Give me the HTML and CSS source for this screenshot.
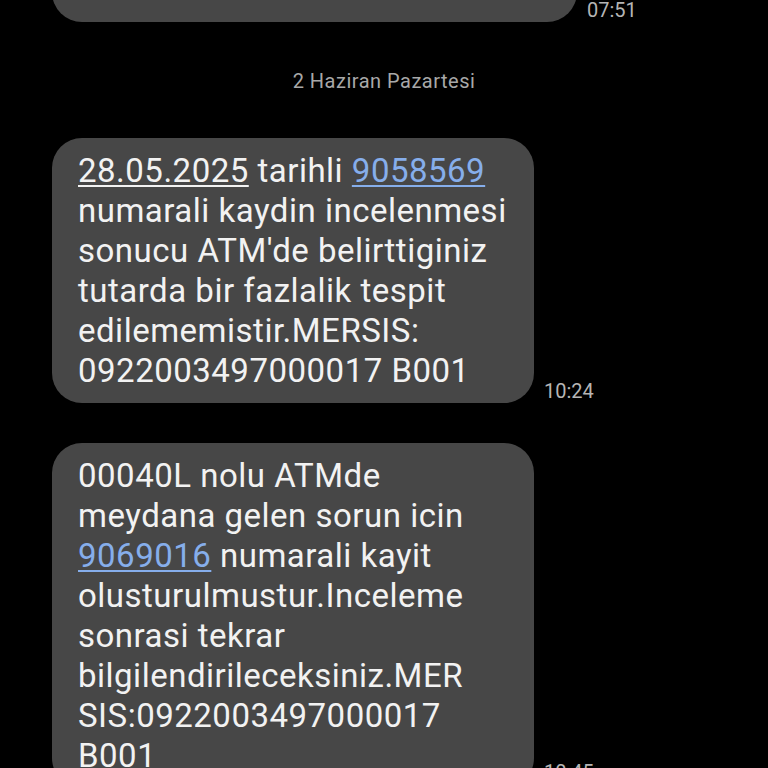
FILE: index.html
```html
<!DOCTYPE html>
<html lang="tr">
<head>
<meta charset="utf-8">
<title>Mesajlar</title>
<link rel="stylesheet" href="styles.css">
</head>
<body>
<div class="thread">
  <div class="msg msg-top">
    <div class="bubble bubble-top"><span class="tail-dot">,</span></div>
    <span class="time">07:51</span>
  </div>

  <div class="date">2 Haziran Pazartesi</div>

  <div class="msg">
    <div class="bubble">
      <span class="date-link">28.05.2025</span> tarihli <span class="link">9058569</span><br>
      numarali kaydin incelenmesi<br>
      sonucu ATM'de belirttiginiz<br>
      tutarda bir fazlalik tespit<br>
      edilememistir.MERSIS:<br>
      0922003497000017 B001
    </div>
    <span class="time">10:24</span>
  </div>

  <div class="msg">
    <div class="bubble">
      00040L nolu ATMde<br>
      meydana gelen sorun icin<br>
      <span class="link">9069016</span> numarali kayit<br>
      olusturulmustur.Inceleme<br>
      sonrasi tekrar<br>
      bilgilendirileceksiniz.MER<br>
      SIS:0922003497000017<br>
      B001
    </div>
    <span class="time time-last">10:45</span>
  </div>
</div>
</body>
</html>
```
FILE: styles.css
```css
html, body {
  margin: 0;
  padding: 0;
  background: #000;
  height: 768px;
  overflow: hidden;
}

.thread {
  display: flex;
  flex-direction: column;
  gap: 40px;
  font-family: Roboto, "Noto Sans", sans-serif;
  color: #f2f2f2;
}

.msg {
  display: flex;
  align-items: flex-end;
  gap: 10px;
  padding-left: 52px;
}

.msg-top {
  margin-top: -38px;
}

.bubble {
  width: 482px;
  box-sizing: border-box;
  background: #474747;
  border-radius: 30px;
  padding: 13px 20px 12px 26px;
  font-size: 33px;
  line-height: 40px;
  letter-spacing: 0.5px;
  white-space: nowrap;
}

.bubble-top {
  width: 525px;
  height: 60px;
  position: relative;
}

.tail-dot {
  position: absolute;
  left: 150px;
  top: 8px;
  font-size: 20px;
  line-height: 20px;
  color: #9a9a9a;
}

.time {
  font-size: 20px;
  line-height: 24px;
  color: #b5b5b5;
}

.time-last {
  margin-bottom: 4px;
}

.date {
  text-align: center;
  font-size: 20px;
  line-height: 24px;
  letter-spacing: 0.5px;
  color: #a8a8a8;
  margin: -40px 0;
  padding: 47px 0 45px;
}

.date-link {
  text-decoration: underline;
  text-decoration-thickness: 2px;
  text-underline-offset: 3px;
}

.link {
  color: #86aeeb;
  text-decoration: underline;
  text-decoration-thickness: 2px;
  text-underline-offset: 3px;
}
```
